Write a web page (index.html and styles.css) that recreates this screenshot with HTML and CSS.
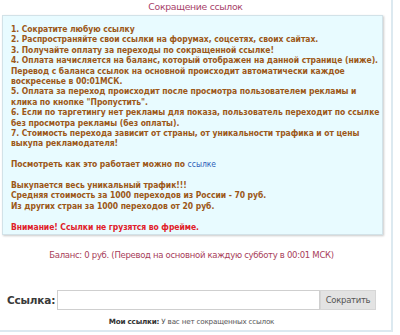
FILE: index.html
```html
<!DOCTYPE html>
<html lang="ru">
<head>
<meta charset="utf-8">
<link rel="stylesheet" href="styles.css">
</head>
<body>
<div class="page">
  <div class="title">Сокращение ссылок</div>
  <div class="info">
    <p>1. Сократите любую ссылку<br>
    2. Распространяйте свои ссылки на форумах, соцсетях, своих сайтах.<br>
    3. Получайте оплату за переходы по сокращенной ссылке!<br>
    4. Оплата начисляется на баланс, который отображен на данной странице (ниже).<br>
    Перевод с баланса ссылок на основной происходит автоматически каждое<br>
    воскресенье в 00:01МСК.<br>
    5. Оплата за переход происходит после просмотра пользователем рекламы и<br>
    клика по кнопке "Пропустить".<br>
    6. Если по таргетингу нет рекламы для показа, пользователь переходит по ссылке<br>
    без просмотра рекламы (без оплаты).<br>
    7. Стоимость перехода зависит от страны, от уникальности трафика и от цены<br>
    выкупа рекламодателя!</p>
    <p>Посмотреть как это работает можно по <a class="link" href="#">ссылке</a></p>
    <p>Выкупается весь уникальный трафик!!!<br>
    Средняя стоимость за 1000 переходов из России - 70 руб.<br>
    Из других стран за 1000 переходов от 20 руб.</p>
    <p class="warn">Внимание! Ссылки не грузятся во фрейме.</p>
  </div>
  <div class="balance">Баланс: 0 руб. (Перевод на основной каждую субботу в 00:01 МСК)</div>
  <form class="form">
    <label class="label">Ссылка:</label>
    <input class="input" type="text">
    <button class="btn" type="button">Сократить</button>
  </form>
  <div class="mylinks"><b>Мои ссылки:</b> У вас нет сокращенных ссылок</div>
</div>
</body>
</html>
```

FILE: styles.css
```css
html, body {
  margin: 0;
  padding: 0;
  background: #fff;
}
body {
  font-family: "DejaVu Sans", Verdana, sans-serif;
}
.page {
  width: 393px;
  height: 332px;
  border-right: 2px solid #dce9f0;
  border-bottom: 2px solid #dce9f0;
  box-sizing: border-box;
}
.title {
  text-align: center;
  font-size: 9.3px;
  line-height: 13px;
  color: #a8426a;
  height: 15px;
  letter-spacing: -0.3px;
}
.info {
  margin-left: 2px;
  width: 381px;
  height: 220px;
  box-sizing: border-box;
  background: #e8fbff;
  border: 1px solid #d2e2e8;
  box-shadow: 1px 1px 2px #c9c9c9;
  padding: 8px 3px 0 8px;
  color: #9c5818;
  font-family: "DejaVu Sans Condensed", "DejaVu Sans", sans-serif;
  font-weight: bold;
  font-size: 8.5px;
  line-height: 10.4px;
  letter-spacing: -0.05px;
  white-space: nowrap;
}
.info p {
  margin: 0 0 10.4px 0;
}
.link {
  color: #2f5fb8;
  text-decoration: none;
  font-weight: normal;
}
.warn {
  color: #e0202a;
}
.balance {
  text-align: center;
  margin: 14px 8px 0 0;
  font-size: 8.5px;
  line-height: 12px;
  color: #a8405a;
  letter-spacing: -0.3px;
}
.form {
  display: flex;
  align-items: center;
  margin: 29px 0 0 7px;
}
.label {
  font-weight: bold;
  font-size: 10.5px;
  color: #3a3a3a;
  width: 50px;
  letter-spacing: -0.2px;
}
.input {
  width: 263px;
  height: 20px;
  box-sizing: border-box;
  border: 1px solid #cfcfcf;
  margin: 0;
  padding: 0;
}
.btn {
  width: 56px;
  height: 20px;
  border: 1px solid #d6d6d6;
  background: #e3e3e3;
  color: #555;
  font-family: "DejaVu Sans", sans-serif;
  font-size: 8.5px;
  padding: 0;
  margin: 0;
  letter-spacing: -0.3px;
}
.mylinks {
  text-align: center;
  margin: 7px 8px 0 0;
  font-size: 7.2px;
  color: #555;
  letter-spacing: -0.2px;
}
.mylinks b {
  color: #333;
}
```
